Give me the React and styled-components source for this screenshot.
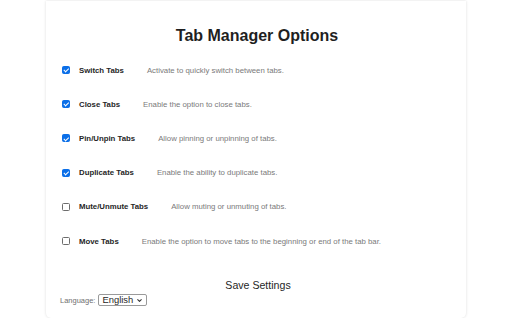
import React, { useState } from "react";
import styled, { createGlobalStyle } from "styled-components";
import { ChevronDown } from "lucide-react";

const GlobalStyle = createGlobalStyle`
  html, body {
    margin: 0;
    padding: 0;
    background: #ffffff;
    font-family: "Liberation Sans", Arial, sans-serif;
  }
`;

const Card = styled.div`
  width: 420px;
  height: 317px;
  box-sizing: border-box;
  margin: 1px auto 0;
  padding: 25px 14px 0 16px;
  background: #ffffff;
  border-radius: 0 0 5px 5px;
  box-shadow: 0 0 3px rgba(0, 0, 0, 0.14);
  display: flex;
  flex-direction: column;
`;

const Title = styled.h1`
  margin: 0;
  font-size: 16px;
  line-height: 20px;
  font-weight: bold;
  text-align: center;
  color: #1f1f1f;
`;

const OptionList = styled.div`
  margin-top: 7px;
  display: grid;
  grid-auto-rows: 34.2px;
`;

const Option = styled.label`
  display: flex;
  align-items: center;
  font-size: 7.8px;
`;

const Check = styled.input.attrs({ type: "checkbox" })`
  appearance: none;
  position: relative;
  width: 8px;
  height: 8px;
  box-sizing: border-box;
  margin: 0 9px 0 0;
  border: 1px solid #6d6d6d;
  border-radius: 1.5px;
  background: #ffffff;

  &:checked {
    background: #0b6fe8;
    border-color: #0b6fe8;
  }

  &:checked::after {
    content: "";
    position: absolute;
    left: 1.8px;
    top: 0.2px;
    width: 1.6px;
    height: 3.6px;
    border: solid #ffffff;
    border-width: 0 1.1px 1.1px 0;
    transform: rotate(45deg);
  }
`;

const OptionName = styled.span`
  font-weight: bold;
  color: #262626;
  margin-right: 23px;
`;

const OptionHint = styled.span`
  color: #7a7a7a;
`;

const SaveButton = styled.button`
  align-self: center;
  margin-top: 21px;
  padding: 0;
  border: none;
  background: none;
  font-family: inherit;
  font-size: 10.6px;
  line-height: 13px;
  color: #262626;
  margin-left: 2px;
`;

const LanguageRow = styled.div`
  display: flex;
  align-items: center;
  gap: 3px;
  margin-top: 2px;
  margin-left: -2px;
  font-size: 7.5px;
  color: #6f6f6f;
`;

const SelectBox = styled.div`
  position: relative;
  display: flex;
  svg {
    position: absolute;
    right: 4px;
    top: 3px;
    pointer-events: none;
    color: #333333;
  }
`;

const Select = styled.select`
  appearance: none;
  height: 12px;
  width: 49px;
  box-sizing: border-box;
  padding: 0 10px 0 3px;
  font-family: inherit;
  font-size: 9.4px;
  line-height: 10px;
  color: #1f1f1f;
  border: 1px solid #9a9a9a;
  border-radius: 2px;
  background: #ffffff;
  outline: none;
`;

const options = [
  { name: "Switch Tabs", hint: "Activate to quickly switch between tabs.", on: true },
  { name: "Close Tabs", hint: "Enable the option to close tabs.", on: true },
  { name: "Pin/Unpin Tabs", hint: "Allow pinning or unpinning of tabs.", on: true },
  { name: "Duplicate Tabs", hint: "Enable the ability to duplicate tabs.", on: true },
  { name: "Mute/Unmute Tabs", hint: "Allow muting or unmuting of tabs.", on: false },
  {
    name: "Move Tabs",
    hint: "Enable the option to move tabs to the beginning or end of the tab bar.",
    on: false,
  },
];

const App = () => {
  const [checked, setChecked] = useState(options.map((o) => o.on));

  const toggle = (i) => {
    setChecked((prev) => prev.map((v, j) => (j === i ? !v : v)));
  };

  return (
    <>
      <GlobalStyle />
      <Card>
        <Title>Tab Manager Options</Title>
        <OptionList>
          {options.map((opt, i) => (
            <Option key={opt.name}>
              <Check checked={checked[i]} onChange={() => toggle(i)} />
              <OptionName>{opt.name}</OptionName>
              <OptionHint>{opt.hint}</OptionHint>
            </Option>
          ))}
        </OptionList>
        <SaveButton>Save Settings</SaveButton>
        <LanguageRow>
          Language:
          <SelectBox>
            <Select defaultValue="en">
              <option value="en">English</option>
              <option value="es">Español</option>
              <option value="fr">Français</option>
            </Select>
            <ChevronDown size={7} strokeWidth={3.5} />
          </SelectBox>
        </LanguageRow>
      </Card>
    </>
  );
};

export default App;
